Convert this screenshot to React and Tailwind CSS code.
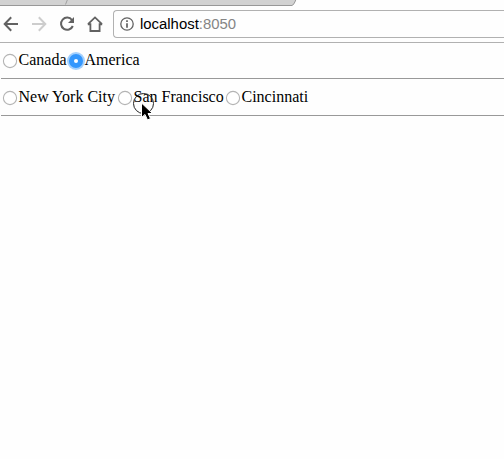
import React from "react";

function Radio({ label, checked = false, width }) {
  return (
    <label className={`flex h-[22px] shrink-0 items-center whitespace-nowrap ${width}`}>
      <svg width="18" height="22" viewBox="0 0 18 22" className="shrink-0 overflow-visible">
        {checked ? (
          <>
            <circle cx="9" cy="13" r="9" fill="#a4d0fd" />
            <circle cx="9" cy="13" r="7" fill="#3397fd" />
            <circle cx="9" cy="13" r="2" fill="#fff" />
          </>
        ) : (
          <circle cx="9" cy="13" r="6.6" fill="#fff" stroke="#b4b4b4" strokeWidth="1.1" />
        )}
      </svg>
      <span className="pt-0.5 leading-[22px] -ml-[0.5px]">{label}</span>
    </label>
  );
}

function Toolbar() {
  return (
    <header className="flex h-[37px] items-start border-b border-[#b1b1b1] bg-[#fefefe] pt-1">
      <svg width="113" height="28" viewBox="0 10 113 28" fill="none" className="shrink-0">
        <path d="M18 24H5M11.2 17.3L4.7 24l6.5 6.7" stroke="#626262" strokeWidth="2" />
        <path d="M32 24h13M38.8 17.3l6.5 6.7-6.5 6.7" stroke="#cdcdcd" strokeWidth="2" />
        <path d="M72 20A6.1 6.1 0 1 0 72.8 26" stroke="#626262" strokeWidth="2" />
        <path d="M74 17v6h-6z" fill="#626262" />
        <path d="M90.4 23.2V31h9.2v-7.8M87.8 24.3h3.1M99.1 24.3h3.1M88 24.2l7-6.8 7 6.8" stroke="#626262" strokeWidth="1.8" />
      </svg>
      <div className="flex h-7 flex-1 items-center rounded-l border border-r-0 border-[#b1b1b1] bg-[#fefefe] pl-1.5">
        <svg width="14" height="14" viewBox="0 0 14 14" fill="none" className="mr-1.5 shrink-0">
          <circle cx="7" cy="7" r="6.2" stroke="#626262" strokeWidth="1.3" />
          <path d="M7 6.2v4.5M7 3.3v1.6" stroke="#555" strokeWidth="1.6" />
        </svg>
        <span className="font-['Liberation_Sans',sans-serif] text-[14.9px] leading-4 text-black">
          localhost<span className="text-[#858585]">:8050</span>
        </span>
      </div>
    </header>
  );
}

export default function App() {
  return (
    <div className="h-[459px] w-[504px] overflow-hidden bg-[#fefefe] font-['Liberation_Serif',serif] text-[16px] text-black">
      <svg width="504" height="6" viewBox="0 0 504 6" className="block">
        <path d="M0 0H296L294 4Q293.5 5 292 5.5H0z" fill="#d2d2d2" />
        <path d="M0 5.5H292Q294 5 296-.5" fill="none" stroke="#989898" />
        <path d="M65.5 4.5l2-5" stroke="#a0a0a0" />
      </svg>
      <Toolbar />
      <main className="pt-[5px]">
        <div className="flex h-[30px] pl-px">
          <Radio label="Canada" width="w-[66px]" />
          <Radio label="America" width="w-[75px]" checked />
        </div>
        <hr className="ml-px border-t border-[#999]" />
        <div className="relative flex h-9 pt-[6px] pl-px">
          <Radio label="New York City" width="w-[115px]" />
          <Radio label="San Francisco" width="w-[108px]" />
          <Radio label="Cincinnati" width="w-[90px]" />
          <svg width="24" height="31" viewBox="132 91 24 31" className="absolute top-3 left-[132px] z-10">
            <circle cx="143.5" cy="103.5" r="10" fill="none" stroke="#222" strokeWidth="1" />
            <path d="M141.5 103v14.5l3.5-3 2.5 5.5 3-1.5-2.5-5h4.5z" fill="#000" stroke="#fff" strokeWidth="1" />
          </svg>
        </div>
        <hr className="ml-px border-t border-[#999]" />
      </main>
    </div>
  );
}
